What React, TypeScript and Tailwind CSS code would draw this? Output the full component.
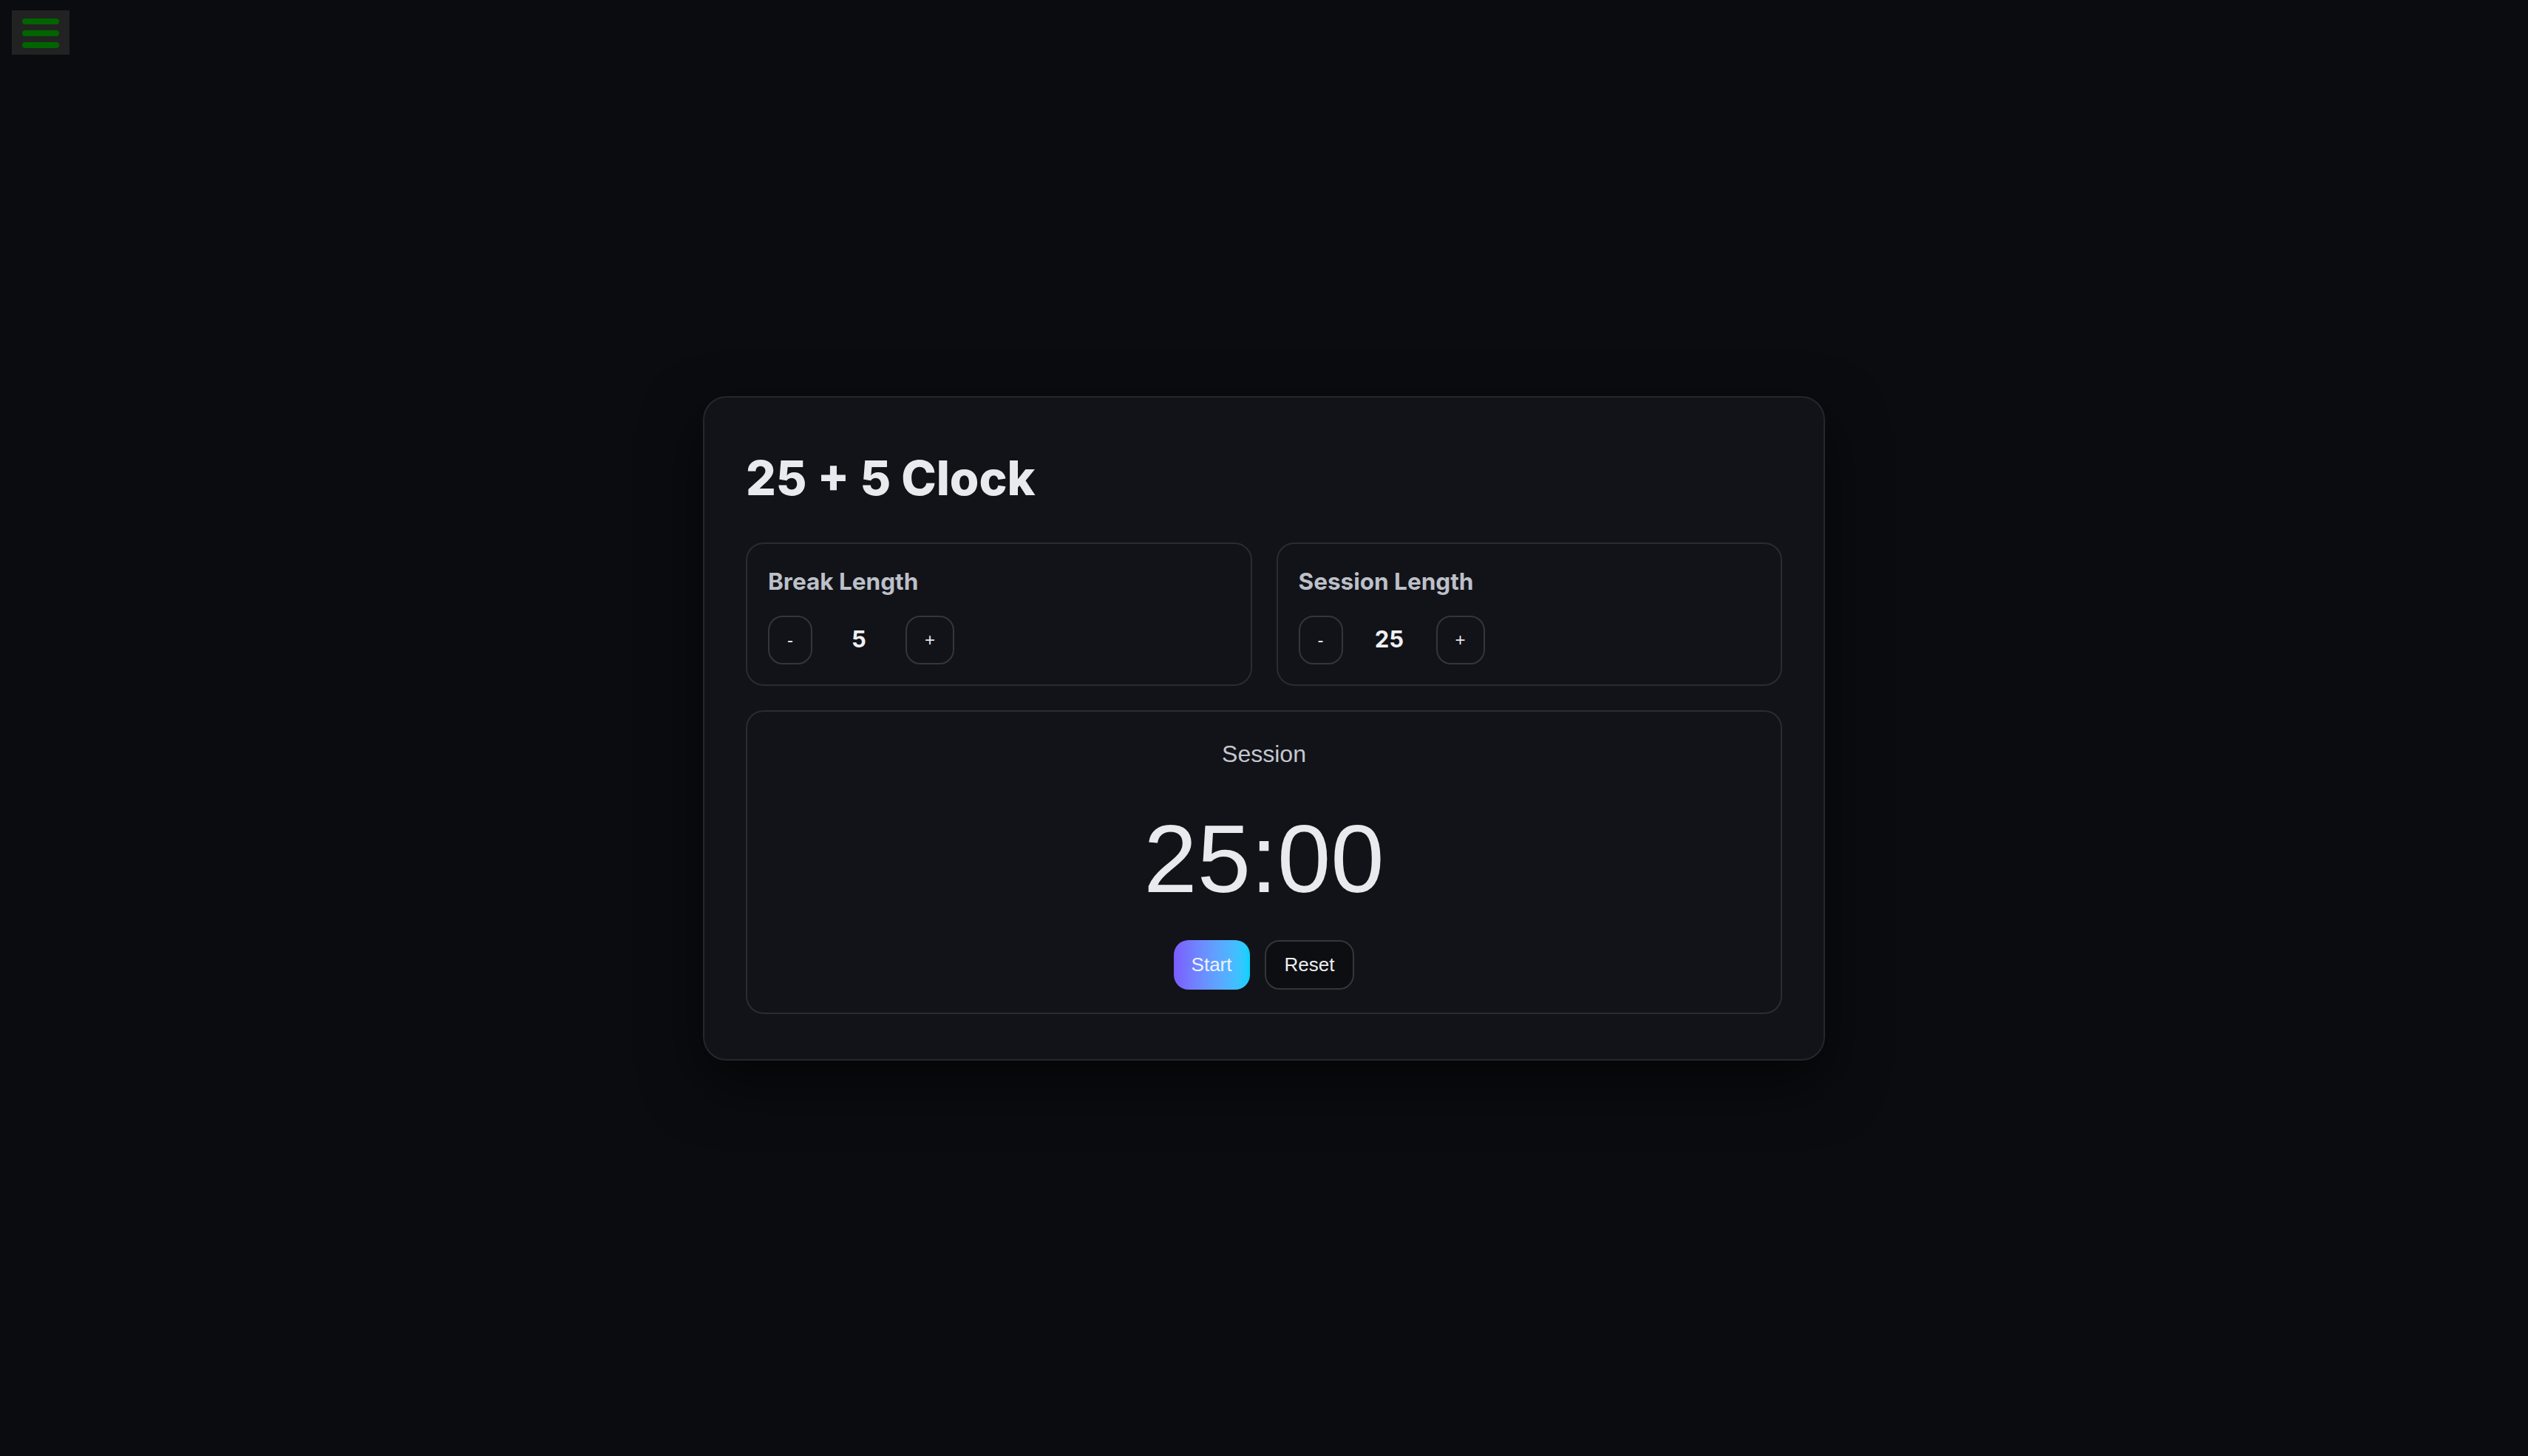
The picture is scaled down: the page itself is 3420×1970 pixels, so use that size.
import React, { useState } from "react";

function Stepper({
  label,
  value,
  onDec,
  onInc,
}: {
  label: string;
  value: number;
  onDec: () => void;
  onInc: () => void;
}) {
  return (
    <div className="flex-1 rounded-[24px] border-2 border-[#2a2c32] bg-[#121318] px-[28px] pt-[30px] pb-[27px]">
      <div className="font-['Inter',sans-serif] text-[31.5px] leading-[42px] font-bold text-[#bcc0c9]">
        {label}
      </div>
      <div className="mt-[25px] flex items-center">
        <button
          onClick={onDec}
          className="flex h-[66px] items-center justify-center rounded-[20px] border-2 border-[#34363c] bg-transparent px-[24px] font-['Liberation_Sans',Arial,sans-serif] text-[24px] text-[#e5e7eb]"
        >
          -
        </button>
        <span className="mx-[24px] w-[78px] text-center font-['Inter',sans-serif] text-[31px] font-bold text-[#eef0f3]">
          {value}
        </span>
        <button
          onClick={onInc}
          className="flex h-[66px] items-center justify-center rounded-[20px] border-2 border-[#34363c] bg-transparent px-[24px] font-['Liberation_Sans',Arial,sans-serif] text-[24px] text-[#e5e7eb]"
        >
          +
        </button>
      </div>
    </div>
  );
}

export default function App() {
  const [breakLen, setBreakLen] = useState(5);
  const [sessionLen, setSessionLen] = useState(25);

  const clamp = (n: number) => Math.max(1, Math.min(60, n));
  const mm = String(sessionLen).padStart(2, "0");

  return (
    <div className="relative flex min-h-screen items-center justify-center bg-[#0b0c10]">
      {/* menu toggle */}
      <button className="absolute left-[16px] top-[14px] flex h-[60px] w-[78px] flex-col gap-[8px] bg-[#222222] px-[14px] pt-[11px]">
        <span className="block h-[8px] w-[50px] rounded-full bg-[#006400]" />
        <span className="block h-[8px] w-[50px] rounded-full bg-[#006400]" />
        <span className="block h-[8px] w-[50px] rounded-full bg-[#006400]" />
      </button>

      <div className="w-[1518px] rounded-[32px] border-2 border-[#25272d] bg-[#121318] px-[56px] pt-[70px] pb-[61px] shadow-[0_30px_80px_rgba(0,0,0,0.6)]">
        <h1 className="font-['Inter',sans-serif] text-[64px] leading-[77px] font-extrabold text-[#e8eaee]">
          25 + 5 Clock
        </h1>

        <div className="mt-[49px] flex gap-[33px]">
          <Stepper
            label="Break Length"
            value={breakLen}
            onDec={() => setBreakLen((v) => clamp(v - 1))}
            onInc={() => setBreakLen((v) => clamp(v + 1))}
          />
          <Stepper
            label="Session Length"
            value={sessionLen}
            onDec={() => setSessionLen((v) => clamp(v - 1))}
            onInc={() => setSessionLen((v) => clamp(v + 1))}
          />
        </div>

        <div className="mt-[33px] flex flex-col items-center rounded-[24px] border-2 border-[#2a2c32] bg-[#121318] pt-[37px] pb-[31px]">
          <div className="font-['Liberation_Sans',Arial,sans-serif] text-[32px] leading-[40px] text-[#c4c8d0]">
            Session
          </div>
          <div className="mt-[57px] font-['Liberation_Sans',Arial,sans-serif] text-[130px] leading-[130px] text-[#e8eaee]">
            {mm}:00
          </div>
          <div className="mt-[45px] flex gap-[20px]">
            <button className="flex h-[67px] items-center rounded-[20px] bg-gradient-to-r from-[#7a5cff] to-[#00d2ff] px-[24px] font-['Liberation_Sans',Arial,sans-serif] text-[26px] text-[#eef2fb]">
              Start
            </button>
            <button className="flex h-[67px] items-center rounded-[20px] border-2 border-[#34363c] bg-[#0d0e12] px-[25px] font-['Liberation_Sans',Arial,sans-serif] text-[26px] text-[#eceef2]">
              Reset
            </button>
          </div>
        </div>
      </div>
    </div>
  );
}
